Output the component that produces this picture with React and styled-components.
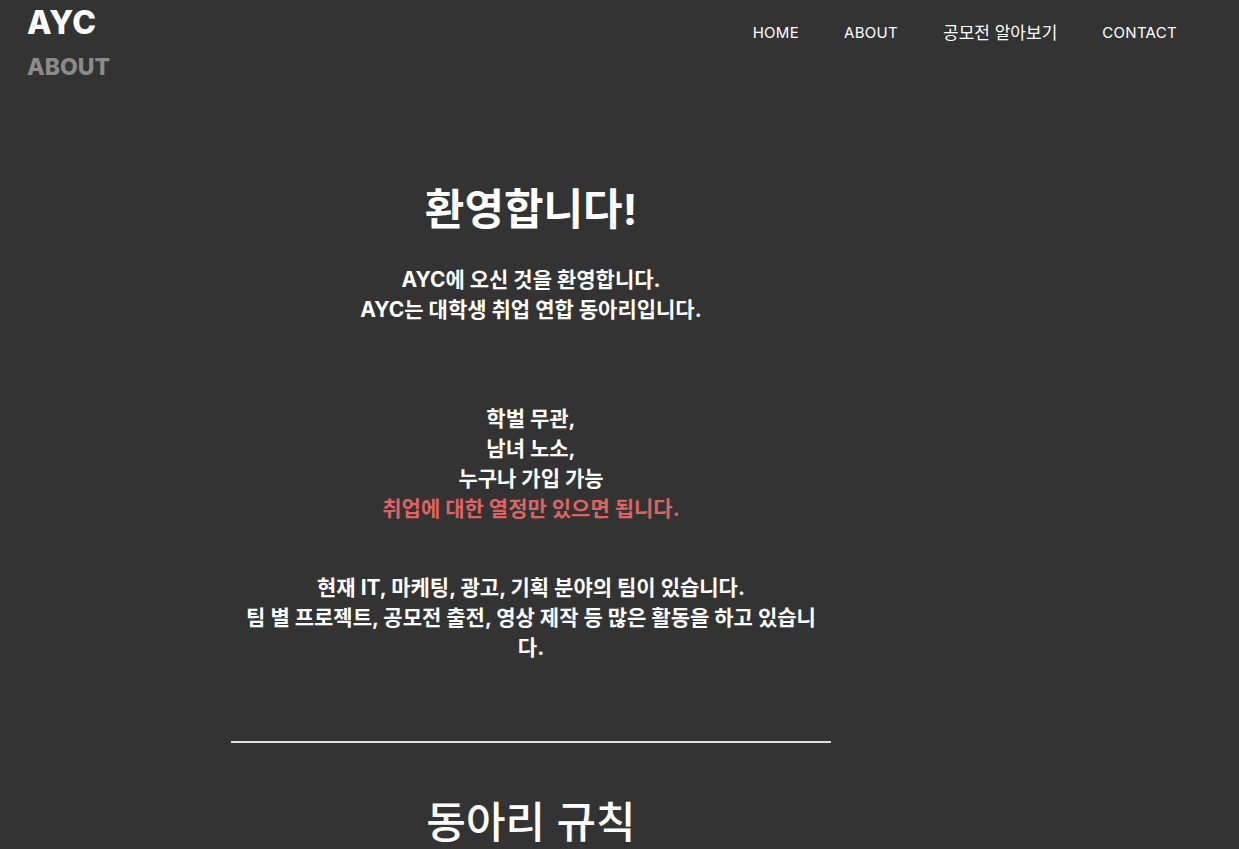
import React from "react";
import styled, { createGlobalStyle } from "styled-components";

const GlobalStyle = createGlobalStyle`
  html, body {
    margin: 0;
    padding: 0;
    background: #333333;
  }
  body {
    font-family: "Inter", "Noto Sans CJK KR", sans-serif;
    color: #ffffff;
  }
  * { box-sizing: border-box; }
`;

function App() {
  return (
    <>
      <GlobalStyle />
      <Header>
        <Brand>
          <Logo>AYC</Logo>
          <PageName>ABOUT</PageName>
        </Brand>
        <Nav>
          <NavItem>HOME</NavItem>
          <NavItem>ABOUT</NavItem>
          <NavItem $ko>공모전 알아보기</NavItem>
          <NavItem>CONTACT</NavItem>
        </Nav>
      </Header>
      <Main>
        <Section>
          <Title>환영합니다!</Title>
          <Paragraph>
            AYC에 오신 것을 환영합니다.
            <br />
            AYC는 대학생 취업 연합 동아리입니다.
          </Paragraph>
          <Paragraph $gap={79}>
            학벌 무관,
            <br />
            남녀 노소,
            <br />
            누구나 가입 가능
            <br />
            <Accent>취업에 대한 열정만 있으면 됩니다.</Accent>
          </Paragraph>
          <Paragraph $gap={49}>
            현재 IT, 마케팅, 광고, 기획 분야의 팀이 있습니다.
            <br />
            팀 별 프로젝트, 공모전 출전, 영상 제작 등 많은 활동을 하고 있습니다.
          </Paragraph>
        </Section>
        <Divider />
        <Title $weight={500} $gap={49}>동아리 규칙</Title>
      </Main>
    </>
  );
}

const Header = styled.header`
  display: flex;
  justify-content: space-between;
  align-items: flex-start;
  padding: 0 62px 0 27px;
`;

const Brand = styled.div`
  display: flex;
  flex-direction: column;
`;

const Logo = styled.h1`
  margin: 0;
  font-size: 32px;
  line-height: 45px;
  font-weight: 800;
  letter-spacing: 0.3px;
`;

const PageName = styled.h2`
  margin: 6px 0 0;
  font-size: 23px;
  line-height: 33px;
  font-weight: 800;
  color: #8b8b8d;
`;

const Nav = styled.nav`
  display: flex;
  align-items: center;
  gap: 45px;
  padding-top: 22px;
`;

const NavItem = styled.a`
  font-size: ${(p) => (p.$ko ? 17 : 15)}px;
  line-height: 22px;
  font-weight: 400;
  letter-spacing: ${(p) => (p.$ko ? 0 : 0.3)}px;
  color: #ffffff;
  cursor: pointer;
`;

const Main = styled.main`
  width: 600px;
  margin-left: 231px;
  text-align: center;
  padding-top: 95px;
`;

const Section = styled.section`
  display: flex;
  flex-direction: column;
`;

const Title = styled.h2`
  margin: ${(p) => p.$gap || 0}px 0 0;
  font-size: 43px;
  line-height: 60px;
  font-weight: ${(p) => p.$weight || 700};
`;

const Paragraph = styled.p`
  margin: ${(p) => p.$gap || 26}px 0 0;
  padding: 0 5px;
  font-size: 21px;
  line-height: 30px;
  font-weight: 700;
`;

const Accent = styled.span`
  color: #dc6464;
`;

const Divider = styled.hr`
  margin: 78px 0 0;
  border: none;
  height: 2px;
  background: #e0e0e0;
`;

export default App;
